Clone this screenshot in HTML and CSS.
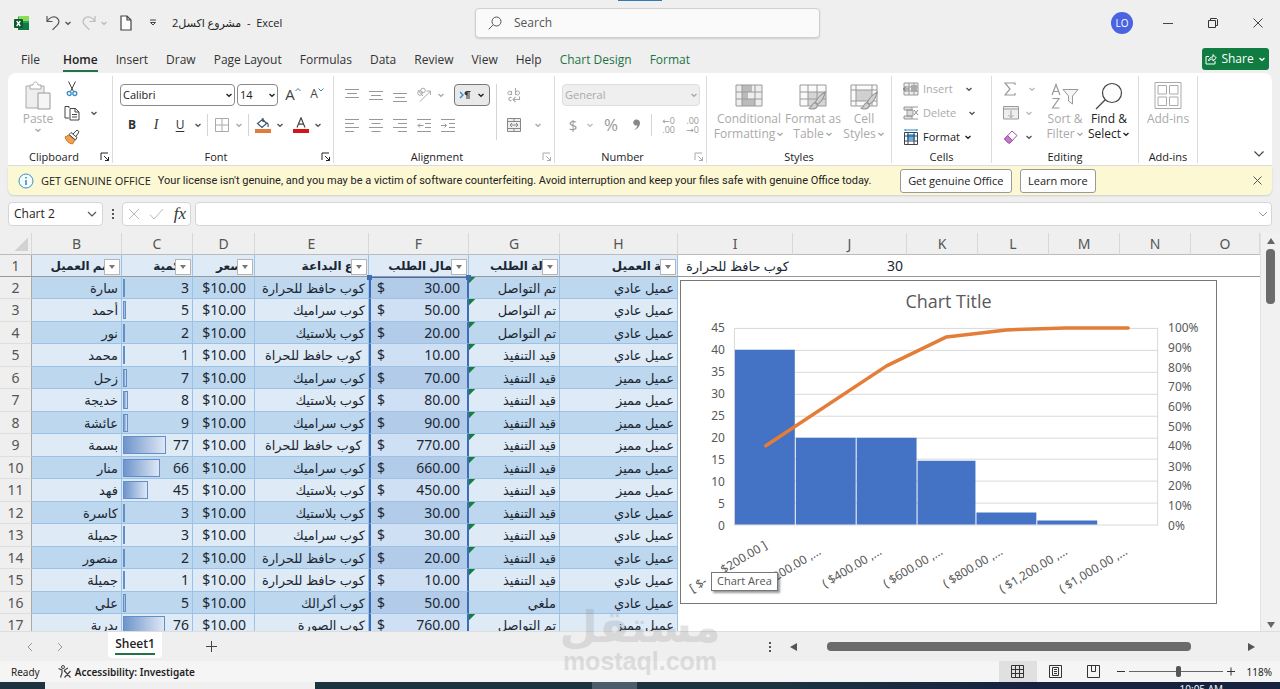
FILE: index.html
```html
<!DOCTYPE html>
<html lang="en">
<head>
<meta charset="utf-8">
<title>مشروع اكسل2 - Excel</title>
<link rel="stylesheet" href="styles.css">
</head>
<body>
<svg class="sprite" aria-hidden="true">
  <symbol id="chev" viewBox="0 0 8 8"><path d="M1.5 3 4 5.2 6.500 3" fill="none" stroke="currentColor" stroke-width="1.4"/></symbol>
  <symbol id="launch" viewBox="0 0 10 10"><path d="M1 8V1h7M4 4l4.500 4.500M8.500 5v3.500H5" fill="none" stroke="currentColor"/></symbol>
  <symbol id="brush" viewBox="0 0 16 18"><path d="M15.500.8C11 3.500 8 7 6.500 10l2.300 2C12 9.500 14.500 5.500 15.500.8zM6 10.500c-2.500 0-2 3.500-5 5 3 1.500 7.500.5 7.300-3z" fill="#d0d0d0" stroke="#979797"/></symbol>
</svg>

<header class="titlebar">
  <div class="quick">
    <svg class="logo" viewBox="0 0 16 16"><path d="M5 1h10v14H4V2z" fill="#21a366"/><path d="M9 1h6v5H5V1z" fill="#8edb55"/><path d="M4 8h11v7H4z" fill="#107c41"/><rect y="4" width="9" height="9" rx="1" fill="#0b5a2d"/><path d="M2.700 6l3.600 5M6.300 6l-3.600 5" stroke="#fff" stroke-width="1.300"/></svg>
    <button class="q-undo" aria-label="Undo"><svg width="16" height="16" viewBox="0 0 16 16"><path d="M2 1v5.500h5.500M2.200 6.200C5 1.500 10 .6 12.600 3.500c2.200 2.500 1.200 5-.6 6.800L7.500 14.800" fill="none" stroke="#555" stroke-width="1.200"/></svg></button>
    <button class="q-drop" aria-label="Undo list"><svg width="8" height="8"><use href="#chev"/></svg></button>
    <button class="q-undo off" aria-label="Redo"><svg width="16" height="16" viewBox="0 0 16 16"><path d="M14 1v5.500H8.500M13.800 6.200C11 1.500 6 .6 3.400 3.500c-2.200 2.500-1.200 5 .6 6.800l4.500 4.500" fill="none" stroke="#bbb" stroke-width="1.200"/></svg></button>
    <button class="q-drop off" aria-label="Redo list"><svg width="8" height="8"><use href="#chev"/></svg></button>
    <button class="q-new" aria-label="New"><svg width="12" height="16" viewBox="0 0 12 16"><path d="M1 1h6l4 4v10H1zM7 1v4h4" fill="#fff" stroke="#444" stroke-width="1.200"/></svg></button>
    <button class="q-more" aria-label="Customize"><svg width="8" height="8" viewBox="0 0 8 8"><path d="M1 1h6M1.500 3.500 4 6l2.500-2.500z" fill="none" stroke="#444"/></svg></button>
    <h1 class="doc-title"><bdi>مشروع اكسل2</bdi> &nbsp;-&nbsp; Excel</h1>
  </div>
  <label class="search">
    <svg width="14" height="14" viewBox="0 0 14 14"><circle cx="8.500" cy="5.500" r="4.500" fill="none" stroke="#555"/><path d="M5.200 8.800.7 13.300" stroke="#555"/></svg>
    <input type="search" placeholder="Search" aria-label="Search">
  </label>
  <div class="window-tools">
    <button class="avatar">LO</button>
    <button class="win" aria-label="Minimize"><svg width="10" height="10"><path d="M0 5.500h10" stroke="#444"/></svg></button>
    <button class="win" aria-label="Restore"><svg width="10" height="10" viewBox="0 0 10 10"><path d="M.5 2.500h7v7h-7zM2.500 2V.5h6l1 1v6H8" fill="none" stroke="#333"/></svg></button>
    <button class="win" aria-label="Close"><svg width="10" height="10"><path d="M.5.5l9 9M9.500.5l-9 9" stroke="#444"/></svg></button>
  </div>
  <span class="edge-mark"></span>
</header>

<nav class="tabs">
  <a href="#" class="file">File</a><a href="#" class="current">Home</a><a href="#">Insert</a><a href="#">Draw</a><a href="#">Page Layout</a><a href="#">Formulas</a><a href="#">Data</a><a href="#">Review</a><a href="#">View</a><a href="#">Help</a><a href="#" class="ctx">Chart Design</a><a href="#" class="ctx">Format</a>
  <button class="share"><svg width="12" height="12" viewBox="0 0 12 12"><path d="M4 3.500H1v7.500h9V8M3.500 8c.3-2.500 2-4 4.500-4V1.500L11.300 5 8 8V6C6 6 4.500 6.600 3.500 8z" fill="none" stroke="#fff"/></svg>Share<svg width="8" height="8"><use href="#chev"/></svg></button>
</nav>

<section class="ribbon">
  <div class="group g-clip">
    <div class="body tall">
      <button class="big paste off"><svg width="28" height="30" viewBox="0 0 28 30"><path d="M2 5h18v22H2z" fill="#eee" stroke="#aaa"/><path d="M6 8V4h3c0-4 5-4 5 0h3v4z" fill="#fff" stroke="#aaa"/><path d="M14 12h12v16H14z" fill="#f5f5f5" stroke="#999"/></svg>Paste<svg width="8" height="8"><use href="#chev"/></svg></button>
      <div class="stack">
        <div class="line"><button class="ico" aria-label="Cut"><svg width="12" height="16" viewBox="0 0 12 16"><path d="M2.500.5l5 10M9.500.5l-5 10" stroke="#444" fill="none"/><circle cx="3.200" cy="12.500" r="2" fill="none" stroke="#3a8fc8" stroke-width="1.300"/><circle cx="8.800" cy="12.500" r="2" fill="none" stroke="#3a8fc8" stroke-width="1.300"/></svg></button></div>
        <div class="line"><button class="ico" aria-label="Copy"><svg width="16" height="16" viewBox="0 0 16 16"><path d="M5 3V1.500H1v11.500h4M6 3.500h5.500l3.500 3.500v8H6zM11 3.500V7h4M8 9.500h5M8 12h5" fill="none" stroke="#444"/></svg></button><button class="drop wide" aria-label="Copy options"><svg width="8" height="8"><use href="#chev"/></svg></button></div>
        <div class="line"><button class="ico" aria-label="Format Painter"><svg width="16" height="16" viewBox="0 0 16 16"><path d="M1 8l4-2 6 5-2.500 4C5 14.500 2 12 1 8z" fill="#f2a14b" stroke="#c9762a"/><path d="M5 5.500 7 3.500l6 5-1.500 2.500zM9 5l4-4 2 1.700L12 7.500" fill="#fff" stroke="#444"/></svg></button></div>
      </div>
    </div>
    <footer>Clipboard<button class="launch" aria-label="Clipboard settings"><svg width="10" height="10"><use href="#launch"/></svg></button></footer>
  </div>

  <div class="group g-font">
    <div class="body">
      <div class="rows">
        <div class="line">
          <span class="combo font-name"><select aria-label="Font"><option>Calibri</option></select><svg width="8" height="8"><use href="#chev"/></svg></span>
          <span class="combo font-size"><select aria-label="Font size"><option>14</option></select><svg width="8" height="8"><use href="#chev"/></svg></span>
          <button class="ico grow" aria-label="Increase font size"><b>A</b><svg width="6" height="6" viewBox="0 0 6 6"><path d="M.5 4 3 1.500 5.500 4" fill="none" stroke="#2f86b7"/></svg></button>
          <button class="ico grow small" aria-label="Decrease font size"><b>A</b><svg width="6" height="6" viewBox="0 0 6 6"><path d="M.5 1.500 3 4 5.500 1.500" fill="none" stroke="#2f86b7"/></svg></button>
        </div>
        <div class="line">
          <button class="ico bold">B</button><button class="ico italic">I</button><button class="ico under">U</button><button class="drop" aria-label="Underline options"><svg width="8" height="8"><use href="#chev"/></svg></button>
          <i class="bar"></i>
          <button class="ico n" aria-label="Borders"><svg width="14" height="14" viewBox="0 0 14 14"><path d="M.5.500h13v13H.500zM7 .5v13M.5 7h13" fill="none" stroke="#aaa"/></svg></button><button class="drop off" aria-label="Border options"><svg width="8" height="8"><use href="#chev"/></svg></button>
          <i class="bar"></i>
          <button class="ico n" aria-label="Fill color"><svg width="16" height="16" viewBox="0 0 16 16"><path d="M7 1.500 11.500 6.500 7 10.500 2.500 6.500 8 2V5M11.500 5.500c1.500.5 2 2 1.500 4.500" fill="none" stroke="#3b5a70" stroke-width="1.200"/><path d="M0 12h16v4H0z" fill="#e07b39"/></svg></button><button class="drop" aria-label="Fill options"><svg width="8" height="8"><use href="#chev"/></svg></button>
          <button class="ico n tint" aria-label="Font color"><svg width="16" height="16" viewBox="0 0 16 16"><path d="M4 10.500 8 .8l4 9.700M5.300 7.200h5.400" fill="none" stroke="#444" stroke-width="1.200"/><path d="M0 12h16v4H0z" fill="#d8121b"/></svg></button><button class="drop" aria-label="Font color options"><svg width="8" height="8"><use href="#chev"/></svg></button>
        </div>
      </div>
    </div>
    <footer>Font<button class="launch" aria-label="Font settings"><svg width="10" height="10"><use href="#launch"/></svg></button></footer>
  </div>

  <div class="group g-align">
    <div class="body">
      <div class="rows">
        <div class="line">
          <button class="ico" aria-label="Top align"><svg width="14" height="14" viewBox="0 0 14 14"><path d="M0 1.500h14M2 5.500h10M0 9.500h14" stroke="#999"/></svg></button>
          <button class="ico" aria-label="Middle align"><svg width="14" height="14" viewBox="0 0 14 14"><path d="M0 3.500h14M2 7.500h10M0 11.500h14" stroke="#999"/></svg></button>
          <button class="ico" aria-label="Bottom align"><svg width="14" height="14" viewBox="0 0 14 14"><path d="M0 5.500h14M2 9.500h10M0 13.500h14" stroke="#999"/></svg></button>
          <button class="ico" aria-label="Orientation"><svg width="16" height="16" viewBox="0 0 16 16"><circle cx="4" cy="6" r="2.300" fill="none" stroke="#aaa"/><circle cx="7" cy="3.500" r="2.300" fill="none" stroke="#aaa"/><path d="M2 3l5 6M4 14.500 14.500 4M10.500 4h4v4" fill="none" stroke="#aaa"/></svg></button><button class="drop slim off" aria-label="Orientation options"><svg width="8" height="8"><use href="#chev"/></svg></button>
          <button class="direction" aria-label="Text direction"><svg width="12" height="10" viewBox="0 0 12 10"><path d="M1 2l3 3-3 3" fill="none" stroke="#2f86c7" stroke-width="1.300"/><path d="M8 1.500v7.500M10 1.500v7.500M11.500 1.500H8" stroke="#333" fill="none"/><path d="M8.500 1c-4 0-4 4.500 0 4.500z" fill="#333"/></svg><svg width="8" height="8"><use href="#chev"/></svg></button>
        </div>
        <div class="line">
          <button class="ico" aria-label="Align left"><svg width="14" height="14" viewBox="0 0 14 14"><path d="M0 1.500h14M0 5.500h9M0 9.500h14M0 13.500h9" stroke="#999"/></svg></button>
          <button class="ico" aria-label="Center"><svg width="14" height="14" viewBox="0 0 14 14"><path d="M0 1.500h14M2.500 5.500h9M0 9.500h14M2.500 13.500h9" stroke="#999"/></svg></button>
          <button class="ico" aria-label="Align right"><svg width="14" height="14" viewBox="0 0 14 14"><path d="M0 1.500h14M5 5.500h9M0 9.500h14M5 13.500h9" stroke="#999"/></svg></button>
          <button class="ico" aria-label="Decrease indent"><svg width="14" height="14" viewBox="0 0 14 14"><path d="M0 1.500h14M8 5.500h6M8 9.500h6M0 13.500h14M6.500 7.500H1M3 5.500l-2 2 2 2" stroke="#999" fill="none"/></svg></button>
          <button class="ico" aria-label="Increase indent"><svg width="14" height="14" viewBox="0 0 14 14"><path d="M0 1.500h14M8 5.500h6M8 9.500h6M0 13.500h14M0 7.500h5.500M3.500 5.500l2 2-2 2" stroke="#999" fill="none"/></svg></button>
        </div>
      </div>
      <i class="bar full"></i>
      <div class="rows merge">
        <div class="line"><button class="ico off wrap" aria-label="Wrap text"><svg width="14" height="16" viewBox="0 0 14 16"><path d="M4.500 4v4M8.500 1v7M4.500 10.500C1 9.500 1 14.500 4.500 13.500M6 12.500h6.500V9.500M8.500 10l-2.500 2.500 2.500 2.500" fill="none" stroke="#aaa" stroke-width="1.100"/><circle cx="2.700" cy="6" r="1.800" fill="none" stroke="#aaa"/><circle cx="10.500" cy="6" r="2" fill="none" stroke="#aaa"/></svg></button></div>
        <div class="line"><button class="ico" aria-label="Merge"><svg width="14" height="14" viewBox="0 0 14 14"><path d="M.5.500h13v13H.500zM.5 3.500h13M.5 10.500h13M7 .5v3M7 10.500v3M3 7h8M5 5 3 7l2 2M9 5l2 2-2 2" fill="#eee" stroke="#888"/></svg></button><button class="drop wide off" aria-label="Merge options"><svg width="8" height="8"><use href="#chev"/></svg></button></div>
      </div>
    </div>
    <footer>Alignment<button class="launch off" aria-label="Alignment settings"><svg width="10" height="10"><use href="#launch"/></svg></button></footer>
  </div>

  <div class="group g-num">
    <div class="body">
      <div class="rows">
        <div class="line"><span class="combo format off"><select aria-label="Number format" disabled><option>General</option></select><svg width="8" height="8"><use href="#chev"/></svg></span></div>
        <div class="line off">
          <button class="ico n sym">$</button><button class="drop" aria-label="Currency options"><svg width="8" height="8"><use href="#chev"/></svg></button>
          <button class="ico sym pct">%</button>
          <button class="ico n" aria-label="Comma style"><svg width="10" height="12" viewBox="0 0 10 12"><path d="M4.500.5a3 3 0 1 0 1 5.700C5 8.500 3.500 10 1.500 11c3.500-.5 6.500-3.500 6.500-7 0-2-1.500-3.500-3.500-3.500z" fill="#888"/></svg></button>
          <i class="bar"></i>
          <button class="ico dec" aria-label="Increase decimal"><span>←0</span><span>.00</span></button>
          <button class="ico dec" aria-label="Decrease decimal"><span>.00</span><span>→0</span></button>
        </div>
      </div>
    </div>
    <footer>Number<button class="launch off" aria-label="Number settings"><svg width="10" height="10"><use href="#launch"/></svg></button></footer>
  </div>

  <div class="group g-styles">
    <div class="body tall">
      <button class="big cond off"><svg width="28" height="30" viewBox="0 0 28 30"><path d="M1 4h26v21H1z" fill="#eee"/><path d="M7 4h10v7H7zM7 11h6v7H7zM7 18h13v7H7z" fill="#bbb"/><path d="M1 4h26v21H1zM1 11h26M1 18h26M7 4v21M20 4v21" fill="none" stroke="#999"/></svg>Conditional<span>Formatting <svg width="8" height="8"><use href="#chev"/></svg></span></button>
      <button class="big fmt off"><svg width="28" height="30" viewBox="0 0 28 30"><path d="M1 4h26v21H1z" fill="#fafafa"/><path d="M9 11h18v14H9z" fill="#d5d5d5"/><path d="M1 4h26v21H1zM1 11h26M1 18h26M9 4v21M18 4v21" fill="none" stroke="#999"/><use href="#brush" x="8" y="10" width="20" height="20"/></svg>Format as<span>Table <svg width="8" height="8"><use href="#chev"/></svg></span></button>
      <button class="big cellst off"><svg width="28" height="30" viewBox="0 0 28 30"><path d="M1 4h26v21H1z" fill="#fafafa"/><path d="M6 9h16v11H6z" fill="#d0d0d0"/><path d="M1 4h26v21H1zM1 9h26M1 20h26M6 4v21M22 4v21" fill="none" stroke="#999"/><use href="#brush" x="9" y="10" width="20" height="20"/></svg>Cell<span>Styles <svg width="8" height="8"><use href="#chev"/></svg></span></button>
    </div>
    <footer>Styles</footer>
  </div>

  <div class="group g-cells">
    <div class="body tall">
      <div class="stack">
        <div class="line"><button class="cmd off"><svg width="16" height="14" viewBox="0 0 16 14"><path d="M1 1h14v12H1zM1 5h14M1 9h14M6 1v12M11 1v12" fill="#eee" stroke="#999"/><path d="M8 3h6v7H8z" fill="#aaa"/><path d="M0 7h6M3 4.500 .5 7 3 9.500" fill="none" stroke="#777"/></svg>Insert</button><button class="drop far" aria-label="Insert options"><svg width="8" height="8"><use href="#chev"/></svg></button></div>
        <div class="line"><button class="cmd off"><svg width="16" height="14" viewBox="0 0 16 14"><path d="M1 1h14M1 13h14M1 1v3h8V1M1 13v-3h8v3M4 4v6h6V4z" fill="#ddd" stroke="#999"/><path d="M11 4l4 5M15 4l-4 5" stroke="#888"/></svg>Delete</button><button class="drop far" aria-label="Delete options"><svg width="8" height="8"><use href="#chev"/></svg></button></div>
        <div class="line"><button class="cmd"><svg width="16" height="16" viewBox="0 0 16 16"><path d="M4 5h8v6H4z" fill="#5fb3e8"/><path d="M1.500 3.500h13v12h-13zM1.500 7h13M1.500 12h13M5 3.500v12M11 3.500v12" fill="none" stroke="#345"/><path d="M2 1h12M2 0v2M14 0v2" stroke="#2f86c7"/></svg>Format<svg width="8" height="8"><use href="#chev"/></svg></button></div>
      </div>
    </div>
    <footer>Cells</footer>
  </div>

  <div class="group g-edit">
    <div class="body tall">
      <div class="stack">
        <div class="line off"><button class="ico" aria-label="AutoSum"><svg width="12" height="14" viewBox="0 0 12 14"><path d="M11 3V1H1l5 6-5 6h10v-2" fill="none" stroke="#999" stroke-width="1.200"/></svg></button><button class="drop far" aria-label="Sum options"><svg width="8" height="8"><use href="#chev"/></svg></button></div>
        <div class="line off"><button class="ico" aria-label="Fill"><svg width="16" height="14" viewBox="0 0 16 14"><path d="M.5.500h15v12.500H.500zM.5 3h15M8 4.500v7M5.500 9 8 11.500 10.500 9" fill="#eee" stroke="#999"/></svg></button><button class="drop" aria-label="Fill options"><svg width="8" height="8"><use href="#chev"/></svg></button></div>
        <div class="line"><button class="ico" aria-label="Clear"><svg width="16" height="14" viewBox="0 0 16 14"><path d="M9 1l5 4.500-7 7.500H5.500L1.500 9z" fill="#fff" stroke="#9b4fa5"/><path d="M4.500 5.500 9.500 10.500 7 13H5.500L1.500 9z" fill="#c27acb" stroke="#9b4fa5"/></svg></button><button class="drop" aria-label="Clear options"><svg width="8" height="8"><use href="#chev"/></svg></button></div>
      </div>
      <button class="big sort off"><svg width="28" height="30" viewBox="0 0 28 30"><path d="M1 14 5 3.500 9 14M2.500 10.500h5M1.500 17.500H8L1.500 27H8.500" fill="none" stroke="#999" stroke-width="1.200"/><path d="M12 8.500h15l-5.500 6.500v8l-4-3v-5z" fill="#f5f5f5" stroke="#999"/></svg>Sort &amp;<span>Filter <svg width="8" height="8"><use href="#chev"/></svg></span></button>
      <button class="big find"><svg width="28" height="30" viewBox="0 0 28 30"><circle cx="17" cy="12" r="9.500" fill="#fdfdfd" stroke="#444" stroke-width="1.200"/><path d="M10 19 1 28" stroke="#444" stroke-width="1.300"/></svg>Find &amp;<span>Select <svg width="8" height="8"><use href="#chev"/></svg></span></button>
    </div>
    <footer>Editing</footer>
  </div>

  <div class="group g-add">
    <div class="body tall">
      <button class="big off"><svg width="28" height="30" viewBox="0 0 28 30"><path d="M1 1.500h26v26H1zM4 4.500h8.500v8.500H4zM15.500 4.500H24v8.500h-8.500zM4 16h8.500v8.500H4zM15.500 16H24v8.500h-8.500z" fill="none" stroke="#aaa"/></svg>Add-ins</button>
    </div>
    <footer>Add-ins</footer>
  </div>
  <button class="collapse" aria-label="Collapse ribbon"><svg width="12" height="8" viewBox="0 0 12 8"><path d="M1.500 1.500 6 6l4.500-4.500" fill="none" stroke="#444" stroke-width="1.200"/></svg></button>
</section>

<aside class="notice">
  <svg width="16" height="16" viewBox="0 0 16 16"><circle cx="8" cy="8" r="7" fill="#f4fbff" stroke="#3e8fc0"/><path d="M8 7v5M8 4v1.600" stroke="#2b7db0" stroke-width="1.400"/></svg>
  <strong>GET GENUINE OFFICE</strong>
  <span>Your license isn't genuine, and you may be a victim of software counterfeiting. Avoid interruption and keep your files safe with genuine Office today.</span>
  <button class="get">Get genuine Office</button>
  <button class="learn">Learn more</button>
  <button class="dismiss" aria-label="Close message"><svg width="9" height="9"><path d="M.5.5l8 8M8.500.5l-8 8" stroke="#555"/></svg></button>
</aside>

<section class="formula">
  <span class="combo namebox"><select aria-label="Name box"><option>Chart 2</option></select><svg width="10" height="8" viewBox="0 0 10 8"><path d="M1 2l4 4 4-4" fill="none" stroke="#555" stroke-width="1.200"/></svg></span>
  <svg width="4" height="12"><path d="M1 1h2v2H1zM1 5h2v2H1zM1 9h2v2H1z" fill="#555"/></svg>
  <div class="fxbox">
    <button aria-label="Cancel"><svg width="12" height="12"><path d="M1 1l10 10M11 1 1 11" stroke="#bbb"/></svg></button>
    <button aria-label="Enter"><svg width="15" height="12"><path d="M1 6.500 5 11 14 1" fill="none" stroke="#bbb"/></svg></button>
    <button class="fx">fx</button>
  </div>
  <span class="combo input"><input type="text" aria-label="Formula bar"><svg width="10" height="8" viewBox="0 0 10 8"><path d="M1 2l4 4 4-4" fill="none" stroke="#999"/></svg></span>
</section>

<main class="sheet">
  <div class="canvas">
    <table class="cells">
      <colgroup><col class="w-no"><col class="w-b"><col class="w-c"><col class="w-d"><col class="w-e"><col class="w-f"><col class="w-g"><col class="w-h"><col class="w-i"><col class="w-j"><col class="w-k"><col class="w-k"><col class="w-k"><col class="w-k"><col></colgroup>
      <thead><tr><th class="corner"></th><th>B</th><th>C</th><th>D</th><th>E</th><th>F</th><th>G</th><th>H</th><th>I</th><th>J</th><th>K</th><th>L</th><th>M</th><th>N</th><th>O</th></tr></thead>
      <tbody>
        <tr class="head"><th>1</th><td class="ar">اسم العميل<button class="filter" aria-label="Filter"></button></td><td class="ar">الكمية<button class="filter" aria-label="Filter"></button></td><td class="ar">السعر<button class="filter" aria-label="Filter"></button></td><td class="ar">نوع البداعة<button class="filter" aria-label="Filter"></button></td><td class="ar">اجمال الطلب<button class="filter" aria-label="Filter"></button></td><td class="ar">حالة الطلب<button class="filter" aria-label="Filter"></button></td><td class="ar">فئة العميل<button class="filter" aria-label="Filter"></button></td><td class="ar plain">كوب حافظ للحرارة</td><td class="plain num">30</td><td class="plain" colspan="5"></td></tr>
        <tr><th>2</th><td class="ar">سارة</td><td><div class="qty"><i style="width:2px"></i>3</div></td><td class="price">$10.00</td><td class="ar">كوب حافظ للحرارة</td><td class="sum first"><div><span>$</span>30.00</div></td><td class="ar flag">تم التواصل</td><td class="ar">عميل عادي</td></tr>
        <tr><th>3</th><td class="ar">أحمد</td><td><div class="qty"><i style="width:3px"></i>5</div></td><td class="price">$10.00</td><td class="ar">كوب سراميك</td><td class="sum"><div><span>$</span>50.00</div></td><td class="ar flag">تم التواصل</td><td class="ar">عميل عادي</td></tr>
        <tr><th>4</th><td class="ar">نور</td><td><div class="qty"><i style="width:1px"></i>2</div></td><td class="price">$10.00</td><td class="ar">كوب بلاستيك</td><td class="sum"><div><span>$</span>20.00</div></td><td class="ar flag">تم التواصل</td><td class="ar">عميل عادي</td></tr>
        <tr><th>5</th><td class="ar">محمد</td><td><div class="qty"><i style="width:1px"></i>1</div></td><td class="price">$10.00</td><td class="ar">&nbsp;كوب حافظ للحراة</td><td class="sum"><div><span>$</span>10.00</div></td><td class="ar flag">قيد التنفيذ</td><td class="ar">عميل عادي</td></tr>
        <tr><th>6</th><td class="ar">زحل</td><td><div class="qty"><i style="width:4px"></i>7</div></td><td class="price">$10.00</td><td class="ar">كوب سراميك</td><td class="sum"><div><span>$</span>70.00</div></td><td class="ar flag">قيد التنفيذ</td><td class="ar">عميل مميز</td></tr>
        <tr><th>7</th><td class="ar">خديجة</td><td><div class="qty"><i style="width:5px"></i>8</div></td><td class="price">$10.00</td><td class="ar">كوب بلاستيك</td><td class="sum"><div><span>$</span>80.00</div></td><td class="ar flag">قيد التنفيذ</td><td class="ar">عميل مميز</td></tr>
        <tr><th>8</th><td class="ar">عائشة</td><td><div class="qty"><i style="width:5px"></i>9</div></td><td class="price">$10.00</td><td class="ar">كوب سراميك</td><td class="sum"><div><span>$</span>90.00</div></td><td class="ar flag">قيد التنفيذ</td><td class="ar">عميل مميز</td></tr>
        <tr><th>9</th><td class="ar">بسمة</td><td><div class="qty"><i style="width:43px"></i>77</div></td><td class="price">$10.00</td><td class="ar">&nbsp;كوب حافظ للحراة</td><td class="sum"><div><span>$</span>770.00</div></td><td class="ar flag">قيد التنفيذ</td><td class="ar">عميل مميز</td></tr>
        <tr><th>10</th><td class="ar">منار</td><td><div class="qty"><i style="width:37px"></i>66</div></td><td class="price">$10.00</td><td class="ar">كوب سراميك</td><td class="sum"><div><span>$</span>660.00</div></td><td class="ar flag">قيد التنفيذ</td><td class="ar">عميل مميز</td></tr>
        <tr><th>11</th><td class="ar">فهد</td><td><div class="qty"><i style="width:25px"></i>45</div></td><td class="price">$10.00</td><td class="ar">كوب بلاستيك</td><td class="sum"><div><span>$</span>450.00</div></td><td class="ar flag">قيد التنفيذ</td><td class="ar">عميل مميز</td></tr>
        <tr><th>12</th><td class="ar">كاسرة</td><td><div class="qty"><i style="width:2px"></i>3</div></td><td class="price">$10.00</td><td class="ar">كوب بلاستيك</td><td class="sum"><div><span>$</span>30.00</div></td><td class="ar flag">قيد التنفيذ</td><td class="ar">عميل عادي</td></tr>
        <tr><th>13</th><td class="ar">جميلة</td><td><div class="qty"><i style="width:2px"></i>3</div></td><td class="price">$10.00</td><td class="ar">كوب سراميك</td><td class="sum"><div><span>$</span>30.00</div></td><td class="ar flag">قيد التنفيذ</td><td class="ar">عميل عادي</td></tr>
        <tr><th>14</th><td class="ar">منصور</td><td><div class="qty"><i style="width:1px"></i>2</div></td><td class="price">$10.00</td><td class="ar">كوب حافظ للحرارة</td><td class="sum"><div><span>$</span>20.00</div></td><td class="ar flag">قيد التنفيذ</td><td class="ar">عميل عادي</td></tr>
        <tr><th>15</th><td class="ar">جميلة</td><td><div class="qty"><i style="width:1px"></i>1</div></td><td class="price">$10.00</td><td class="ar">كوب حافظ للحرارة</td><td class="sum"><div><span>$</span>10.00</div></td><td class="ar flag">قيد التنفيذ</td><td class="ar">عميل عادي</td></tr>
        <tr><th>16</th><td class="ar">علي</td><td><div class="qty"><i style="width:3px"></i>5</div></td><td class="price">$10.00</td><td class="ar">كوب أكرالك</td><td class="sum"><div><span>$</span>50.00</div></td><td class="ar">ملغي</td><td class="ar">عميل عادي</td></tr>
        <tr><th>17</th><td class="ar">بدرية</td><td><div class="qty"><i style="width:42px"></i>76</div></td><td class="price">$10.00</td><td class="ar">كوب الصورة</td><td class="sum"><div><span>$</span>760.00</div></td><td class="ar flag">تم التواصل</td><td class="ar">عميل مميز</td></tr>
      </tbody>
    </table>

    <figure class="chart">
      <svg viewBox="0 0 536 323" role="img" aria-label="Pareto chart">
        <text x="268" y="27" class="c-title">Chart Title</text>
        <path d="M54 47.500h424M54 69.500h424M54 91.500h424M54 113.500h424M54 135.500h424M54 157.500h424M54 178.500h424M54 200.500h424M54 222.500h424M54 244.500h424M53.500 47v198M477.500 47v198" stroke="#d9d9d9" fill="none"/>
        <path d="M54 69h60v175H54zM115 157h60v87h-60zM176 157h60v87h-60zM237 180h58v64h-58zM296 232h60v12h-60zM357 240h60v4h-60z" fill="#4472c4"/>
        <path d="M85 165 206 85 266 56 326 49 386 47h62" fill="none" stroke="#e37d38" stroke-width="3.500" stroke-linecap="round" stroke-linejoin="round"/>
        <g class="c-left"><text x="44" y="51">45</text><text x="44" y="73">40</text><text x="44" y="95">35</text><text x="44" y="117">30</text><text x="44" y="139">25</text><text x="44" y="161">20</text><text x="44" y="183">15</text><text x="44" y="205">10</text><text x="44" y="227">5</text><text x="44" y="249">0</text></g>
        <g class="c-right"><text x="488" y="51">100%</text><text x="488" y="71">90%</text><text x="488" y="91">80%</text><text x="488" y="110">70%</text><text x="488" y="130">60%</text><text x="488" y="150">50%</text><text x="488" y="169">40%</text><text x="488" y="190">30%</text><text x="488" y="209">20%</text><text x="488" y="229">10%</text><text x="488" y="249">0%</text></g>
        <g class="c-left"><text transform="translate(87 267) rotate(-31)">[ $-&nbsp;&nbsp;&nbsp;&nbsp;&nbsp;&nbsp;$200.00 ]</text><text transform="translate(141 273) rotate(-31)">( $200.00 ,...</text><text transform="translate(202 273) rotate(-31)">( $400.00 ,...</text><text transform="translate(263 273) rotate(-31)">( $600.00 ,...</text><text transform="translate(323 273) rotate(-31)">( $800.00 ,...</text><text transform="translate(388 273) rotate(-31)">( $1,200.00 ,...</text><text transform="translate(448 273) rotate(-31)">( $1,000.00 ,...</text></g>
      </svg>
      <span class="tip">Chart Area</span>
    </figure>
  </div>
  <div class="vscroll"><svg width="10" height="8"><path d="M5 1l4 6H1z" fill="#666"/></svg><i></i><svg width="10" height="8"><path d="M5 7l4-6H1z" fill="#666"/></svg></div>
</main>

<section class="sheetbar">
  <button class="nav" aria-label="Previous sheet"><svg width="6" height="10"><path d="M5 1 1 5l4 4" fill="none" stroke="#999"/></svg></button>
  <button class="nav" aria-label="Next sheet"><svg width="6" height="10"><path d="M1 1l4 4-4 4" fill="none" stroke="#999"/></svg></button>
  <button class="sheet-tab"><span>Sheet1</span></button>
  <button class="add" aria-label="New sheet"><svg width="11" height="11"><path d="M0 5.500h11M5.500 0v11" stroke="#444"/></svg></button>
  <div class="hscroll">
    <svg width="4" height="12"><path d="M1 1h2v2H1zM1 5h2v2H1zM1 9h2v2H1z" fill="#555"/></svg>
    <svg width="7" height="10"><path d="M7 1v8L0 5z" fill="#555"/></svg>
    <div class="track"><i></i></div>
    <svg width="7" height="10"><path d="M0 1v8l7-4z" fill="#555"/></svg>
  </div>
</section>

<footer class="status">
  <span class="ready">Ready</span>
  <button class="access"><svg width="13" height="13" viewBox="0 0 13 13"><circle cx="5" cy="2" r="1.500" fill="none" stroke="#444"/><path d="M.5 3.500 4 5v3L2.500 12.500M10 3 6.500 5v2M6.500 6l6 6.500M12.500 6l-6 6.500" fill="none" stroke="#444" stroke-width="1.200"/></svg>Accessibility: Investigate</button>
  <div class="views">
    <button class="on" aria-label="Normal"><svg width="13" height="13"><path d="M.5.500h12v12H.500zM4.500.5v12M8.500.5v12M.5 4.500h12M.5 8.500h12" fill="none" stroke="#333"/></svg></button>
    <button aria-label="Page layout"><svg width="13" height="13"><path d="M.5.500h12v12H.500zM3.500 2.500h6v8h-6zM5 4.500h3M5 6.500h3M5 8.500h3" fill="none" stroke="#333"/></svg></button>
    <button aria-label="Page break"><svg width="13" height="13"><path d="M.5.500h12v12H.500zM4.500.5v6h4v-6" fill="none" stroke="#333"/></svg></button>
    <button class="z" aria-label="Zoom out"><svg width="8" height="9"><path d="M0 4.500h8" stroke="#333"/></svg></button>
    <input type="range" min="0" max="100" value="53" aria-label="Zoom">
    <button class="z" aria-label="Zoom in"><svg width="8" height="9"><path d="M0 4.500h8M4 .5v8" stroke="#333"/></svg></button>
    <span class="pct-label">118%</span>
  </div>
</footer>
<div class="taskbar"><i class="t-search"></i><i class="t-app"></i><time>10:05 AM</time></div>
<div class="watermark" aria-hidden="true"><b dir="rtl">مستقل</b><span>mostaql.com</span></div>
</body>
</html>
```
FILE: styles.css
```css
* { box-sizing: border-box; }
html, body { height: 100%; }
body {
  margin: 0; display: flex; flex-direction: column; overflow: hidden; position: relative;
  background: #efefef; color: #222; font: 12px/16px "Open Sans", "Noto Sans", "DejaVu Sans", sans-serif;
}
button, input, select { font: inherit; color: inherit; background: none; border: 0; padding: 0; margin: 0; }
button { display: inline-flex; align-items: center; justify-content: center; white-space: nowrap; }
select { appearance: none; opacity: 1; }
svg { flex: none; display: block; }
.sprite { position: absolute; width: 0; height: 0; }
.off { color: #aaa; }

/* title bar */
.titlebar { flex: none; height: 45px; display: grid; grid-template-columns: 475px minmax(200px, 345px) 1fr; align-items: center; position: relative; }
.edge-mark { position: absolute; top: 0; left: 618px; width: 44px; height: 1px; background: #2b7cb8; }
.quick { display: flex; align-items: center; padding-left: 14px; }
.logo { width: 16px; height: 16px; margin-right: 14px; }
.q-undo { width: 18px; }
.q-drop { width: 12px; margin-right: 6px; color: #555; }
.q-new { width: 14px; margin: 0 16px 0 3px; }
.q-drop.off { color: #bbb; }
.q-more { width: 8px; margin-right: 15px; }
.doc-title { margin: 0; font-size: 11px; font-weight: 400; white-space: nowrap; }
.search { display: flex; align-items: center; gap: 12px; height: 30px; padding-left: 12px; background: #fafafa; border: 1px solid #cfcfcf; border-radius: 4px; box-shadow: 0 1px 2px #0002; }
.search input { flex: 1; min-width: 0; outline: 0; }
.search input::placeholder { color: #555; opacity: 1; }
.window-tools { display: flex; justify-content: flex-end; align-items: center; }
.avatar { width: 22px; height: 22px; margin-right: 12px; border-radius: 50%; background: #4a63e0; color: #fff; font-size: 10px; }
.win { width: 45px; height: 30px; }

/* tabs */
.tabs { flex: none; display: flex; align-items: center; gap: 18px; height: 28px; padding: 0 11px 0 21px; }
.tabs a { color: #333; text-decoration: none; padding: 6px 0 2px; border-bottom: 2px solid transparent; white-space: nowrap; }
.tabs .file { margin-right: 5px; }
.tabs .current { font-weight: 600; color: #222; border-color: #217346; }
.tabs .ctx { color: #217346; }
.share { margin-left: auto; width: 67px; height: 22px; gap: 4px; border-radius: 3px; background: #107c41; color: #fff; }

/* ribbon */
.ribbon { flex: none; display: flex; margin: 0 8px; height: 93px; padding-top: 3px; background: #fff; border-radius: 8px 8px 0 0; border-bottom: 1px solid #ddd; }
.group { flex: none; display: flex; flex-direction: column; height: 87px; border-right: 1px solid #dcdcdc; }
.body { flex: none; display: flex; height: 73px; padding-top: 8px; }
.body.tall { padding-top: 1px; }
.group footer { display: flex; align-items: center; justify-content: center; position: relative; height: 16px; font-size: 11px; }
.launch { position: absolute; right: 2px; top: 3px; }
.line { display: flex; align-items: center; height: 22px; }
.rows { display: flex; flex-direction: column; gap: 8px; }
.stack { display: flex; flex-direction: column; }
.stack .line { height: 24px; }
.ico { width: 24px; height: 22px; color: #333; }
.ico.n { width: 22px; }
.drop { width: 12px; height: 20px; }
.drop:not(.off) { color: #555; }
.off .drop { color: #bbb; }
.drop.slim { width: 10px; }
.drop.wide { width: 20px; }
.drop.far { width: 22px; }
.bar { width: 1px; height: 22px; margin: 0 3px; background: #d5d5d5; }
.bar.full { height: 56px; margin: 0 5px 0 6px; }
.big { flex-direction: column; justify-content: flex-start; line-height: 15px; height: 70px; padding-top: 4px; font-size: 12px; }
.big span { display: flex; align-items: center; gap: 1px; }
.combo { display: grid; align-items: center; height: 22px; border: 1px solid #8a8a8a; border-radius: 4px; background: #fff; }
.combo > * { grid-area: 1 / 1; min-width: 0; }
.combo select, .combo input { width: 100%; height: 100%; padding-left: 2px; outline: 0; font-size: 11px; }
.combo svg { justify-self: end; margin-right: 1px; pointer-events: none; }

.g-clip { width: 105px; }
.g-clip .body { padding-left: 8px; }
.g-clip footer { padding-right: 12px; }
.paste { width: 44px; }
.g-font { width: 221px; }
.g-font .body { padding-left: 7px; }
.g-font footer { padding-right: 14px; }
.font-name { width: 115px; margin-right: 2px; }
.font-size { width: 41px; margin-right: 3px; }
.grow { align-items: flex-start; line-height: 20px; }
.grow b { font-size: 15px; font-weight: 400; color: #444; }
.grow.small b { font-size: 12px; }
.grow svg { margin-top: 3px; }
.bold { font-weight: 700; }
.italic { font-style: italic; font-family: "Liberation Serif", serif; font-size: 14px; }
.under { text-decoration: underline; text-underline-offset: 2px; }
.tint { margin-left: 4px; }
.g-align { width: 221px; }
.g-align .body { padding-left: 6px; }
.g-align footer { padding-right: 14px; }
.direction { width: 36px; height: 22px; gap: 6px; margin-left: 8px; border: 1px solid #777; border-radius: 4px; background: #e9e9e9; }
.merge .drop { margin-left: 2px; }
.g-num { width: 152px; }
.g-num .body { padding-left: 7px; }
.g-num footer { padding-right: 16px; }
.format { width: 138px; background: #efefef; border-color: #ddd; }
.format select { color: #aaa; }
.sym { font-size: 15px; color: #999; }
.pct { width: 30px; font-size: 17px; }
.dec { flex-direction: column; font-size: 9px; line-height: 9px; color: #999; align-items: flex-end; padding-right: 4px; }
.g-styles { width: 185px; }
.g-styles .body { padding-left: 6px; }
.cond { width: 72px; }
.fmt { width: 56px; }
.cellst { width: 46px; }
.g-cells { width: 100px; }
.g-cells .body { padding-left: 11px; }
.cmd { gap: 4px; font-size: 11px; }
.g-cells .drop.far { margin-left: 5px; }
.g-edit { width: 147px; }
.g-edit .body { padding-left: 7px; }
.g-edit .stack { width: 44px; }
.sort { width: 44px; }
.find { width: 44px; }
.g-add { width: 59px; }
.g-add .big { width: 58px; }
.collapse { margin: 70px 7px 0 auto; width: 12px; height: 16px; }

/* notice */
.notice { flex: none; display: flex; align-items: center; height: 29px; margin: 0 8px; padding: 0 10px; background: #fdf8d4; border-radius: 0 0 6px 6px; box-shadow: 0 1px 2px #0002; font-size: 11px; white-space: nowrap; }
.notice strong { margin: 0 7px; font-weight: 500; }
.notice span { min-width: 733px; font-family: Roboto, sans-serif; }
.notice button { height: 24px; border: 1px solid #999; border-radius: 3px; background: #fff; }
.notice .get { width: 112px; margin-left: 9px; }
.notice .learn { width: 76px; margin-left: 8px; }
.notice .dismiss { margin-left: auto; border: 0; background: none; }

/* formula bar */
.formula { flex: none; display: flex; align-items: center; height: 38px; padding: 0 8px; }
.formula .combo { height: 24px; border-color: #d5d5d5; }
.namebox { width: 95px; margin-right: 8px; }
.formula .combo select { padding-left: 5px; font-size: 12px; }
.namebox svg { margin-right: 5px; }
.fxbox { display: flex; justify-content: space-between; width: 69px; height: 24px; margin: 0 4px 0 7px; padding: 0 4px 0 5px; background: #fff; border: 1px solid #d5d5d5; border-radius: 4px; }
.fx { font: italic 17px/20px "Liberation Serif", serif; color: #333; }
.formula .input { flex: 1; }
.input svg { margin-right: 3px; }

/* grid */
.sheet { flex: 1; min-height: 0; display: flex; }
.canvas { flex: 1; min-width: 0; overflow: hidden; position: relative; background: linear-gradient(#efefef 22px, #fff 22px); }
.cells { width: 100%; table-layout: fixed; border-collapse: separate; border-spacing: 0; font: 14px/20px "Noto Sans", "DejaVu Sans", sans-serif; color: #1b2733; }
.w-no { width: 32px; } .w-b { width: 90px; } .w-c { width: 71px; } .w-d { width: 62px; } .w-e { width: 114px; }
.w-f { width: 100px; } .w-g { width: 91px; } .w-h { width: 118px; } .w-i { width: 115px; } .w-j { width: 114px; } .w-k { width: 71px; }
.cells th, .cells td { height: 22px; padding: 0; overflow: hidden; white-space: nowrap; }
.cells tr:nth-child(odd):not(.head) > td, .cells tbody tr:nth-child(odd):not(.head) > th { height: 23px; }
.cells th { font-weight: 400; color: #555; background: #efefef; border-right: 1px solid #d8d8d8; border-bottom: 1px solid #bbb; }
.cells thead th { background: #efefef; }
.cells .corner { background: linear-gradient(135deg, #efefef 62%, #d2d2d2 62%); background-clip: content-box; padding: 4px 3px 3px 14px; }
.cells tbody th { border-bottom-color: #dedede; border-right-color: #aaa; }
.cells td { text-align: right; background: #deebf7; border-right: 1px solid #9cc3e6; border-bottom: 1px solid #9cc3e6; }
.cells tr:nth-child(even) td { background-color: #bdd7ee; }
.cells .ar { direction: rtl; text-align: right; padding-right: 3px; font-size: 13px; }
.cells .head td { position: relative; font-weight: 700; font-size: 12px; border-bottom: 1px solid #999; }
.cells .head th { border-bottom: 1px solid #999; }
.cells .head .plain { background: #fff; border-right: 0; font-weight: 400; font-size: 13px; padding-right: 4px; }
.cells .head .num { font-size: 14px; }
.filter { position: absolute; right: 1px; top: 4px; width: 16px; height: 16px; background: #fff; border: 1px solid #b5b5b5; }
.filter::after { content: ""; border: 3px solid transparent; border-top: 4px solid #777; border-bottom: 0; }
.qty { display: flex; align-items: center; justify-content: space-between; height: 20px; padding: 0 3px 0 1px; }
.qty i { height: 18px; border: 1px solid #638ec6; background: linear-gradient(90deg, #6e95cb, #dfe7f5); }
.cells .price { padding-right: 8px; }
.cells .sum { position: relative; overflow: visible; background: #d0e0f4; border-left: 2px solid #3d6db5; border-right: 2px solid #3d6db5; padding: 0 7px 0 6px; }
.cells tr:nth-child(even) .sum { background-color: #b1cbe9; }
.sum div { display: flex; justify-content: space-between; }
.cells .first { border-top: 1px solid #3d6db5; }
.first::before, .first::after { content: ""; position: absolute; z-index: 1; top: -3px; left: -4px; width: 5px; height: 5px; background: #3d6db5; border: 0; }
.first::after { left: auto; right: -4px; }
.cells .flag { background-image: linear-gradient(135deg, #15803d 4px, transparent 5px); }
.vscroll { flex: none; width: 20px; display: flex; flex-direction: column; align-items: center; padding: 4px 0 2px; background: #f1f1f1; border-left: 1px solid #e2e2e2; }
.vscroll i { width: 9px; height: 55px; margin: 4px 0 auto; border-radius: 4px; background: #6b6b6b; }

/* chart */
.chart { position: absolute; left: 680px; top: 47px; width: 537px; margin: 0; background: #fff; border: 1px solid #777; }
.chart svg { width: 100%; height: auto; font-family: "Noto Sans", sans-serif; font-size: 12px; fill: #595959; }
.chart .c-title { font-family: "Open Sans", sans-serif; font-size: 18px; text-anchor: middle; }
.c-left { text-anchor: end; }
.tip { position: absolute; left: 30px; top: 291px; height: 19px; padding: 0 5px; background: #fff; border: 1px solid #777; box-shadow: 2px 2px 2px #0006; font-size: 11px; color: #555; }

/* sheet tabs */
.sheetbar { flex: none; display: flex; align-items: center; height: 30px; padding: 0 25px 0 15px; border-top: 1px solid #ddd; }
.nav { width: 30px; height: 22px; }
.sheet-tab { align-self: flex-start; width: 54px; height: 26px; margin-left: 33px; background: #fff; border-radius: 0 0 4px 4px; font-weight: 600; }
.sheet-tab span { border-bottom: 2px solid #217346; line-height: 18px; }
.add { width: 40px; height: 22px; margin-left: 29px; }
.hscroll { display: flex; align-items: center; margin-left: auto; width: 487px; }
.hscroll svg + svg { margin-left: 18px; }
.track { flex: 1; margin: 0 57px 0 30px; }
.track i { display: block; height: 9px; border-radius: 4px; background: #6b6b6b; }

/* status */
.status { flex: none; display: flex; align-items: center; height: 21px; padding: 0 8px 0 11px; background: #f5f5f5; font: 10px/16px "Noto Sans", sans-serif; }
.access { margin-left: 18px; gap: 4px; font-weight: 600; }
.views { display: flex; align-items: center; margin-left: auto; }
.views button { width: 38px; height: 21px; }
.views .on { background: #e0e0e0; }
.views .z { width: 16px; }
.views input { appearance: none; width: 94px; height: 1px; background: #666; }
.views input::-webkit-slider-thumb { appearance: none; width: 5px; height: 11px; border-radius: 2px; background: #555; }
.pct-label { margin-left: 8px; }

.taskbar { flex: none; display: flex; height: 7px; overflow: hidden; padding: 0 57px 0 45px; background: linear-gradient(90deg, #1d3440 0 60%, #17223f 80%); color: #fff; }
.t-search { width: 270px; background: #f0f0f0; }
.t-app { width: 45px; margin-left: 277px; background: #4c5c68; }
.taskbar time { margin-left: auto; font-size: 10px; line-height: 14px; }

.watermark { position: absolute; left: 562px; top: 604px; display: flex; flex-direction: column; align-items: center; width: 156px; color: #888; opacity: .22; pointer-events: none; font-family: "DejaVu Sans", sans-serif; }
.watermark b { font-size: 44px; line-height: 46px; }
.watermark span { font: 700 25px/22px "Liberation Sans", sans-serif; }
```
